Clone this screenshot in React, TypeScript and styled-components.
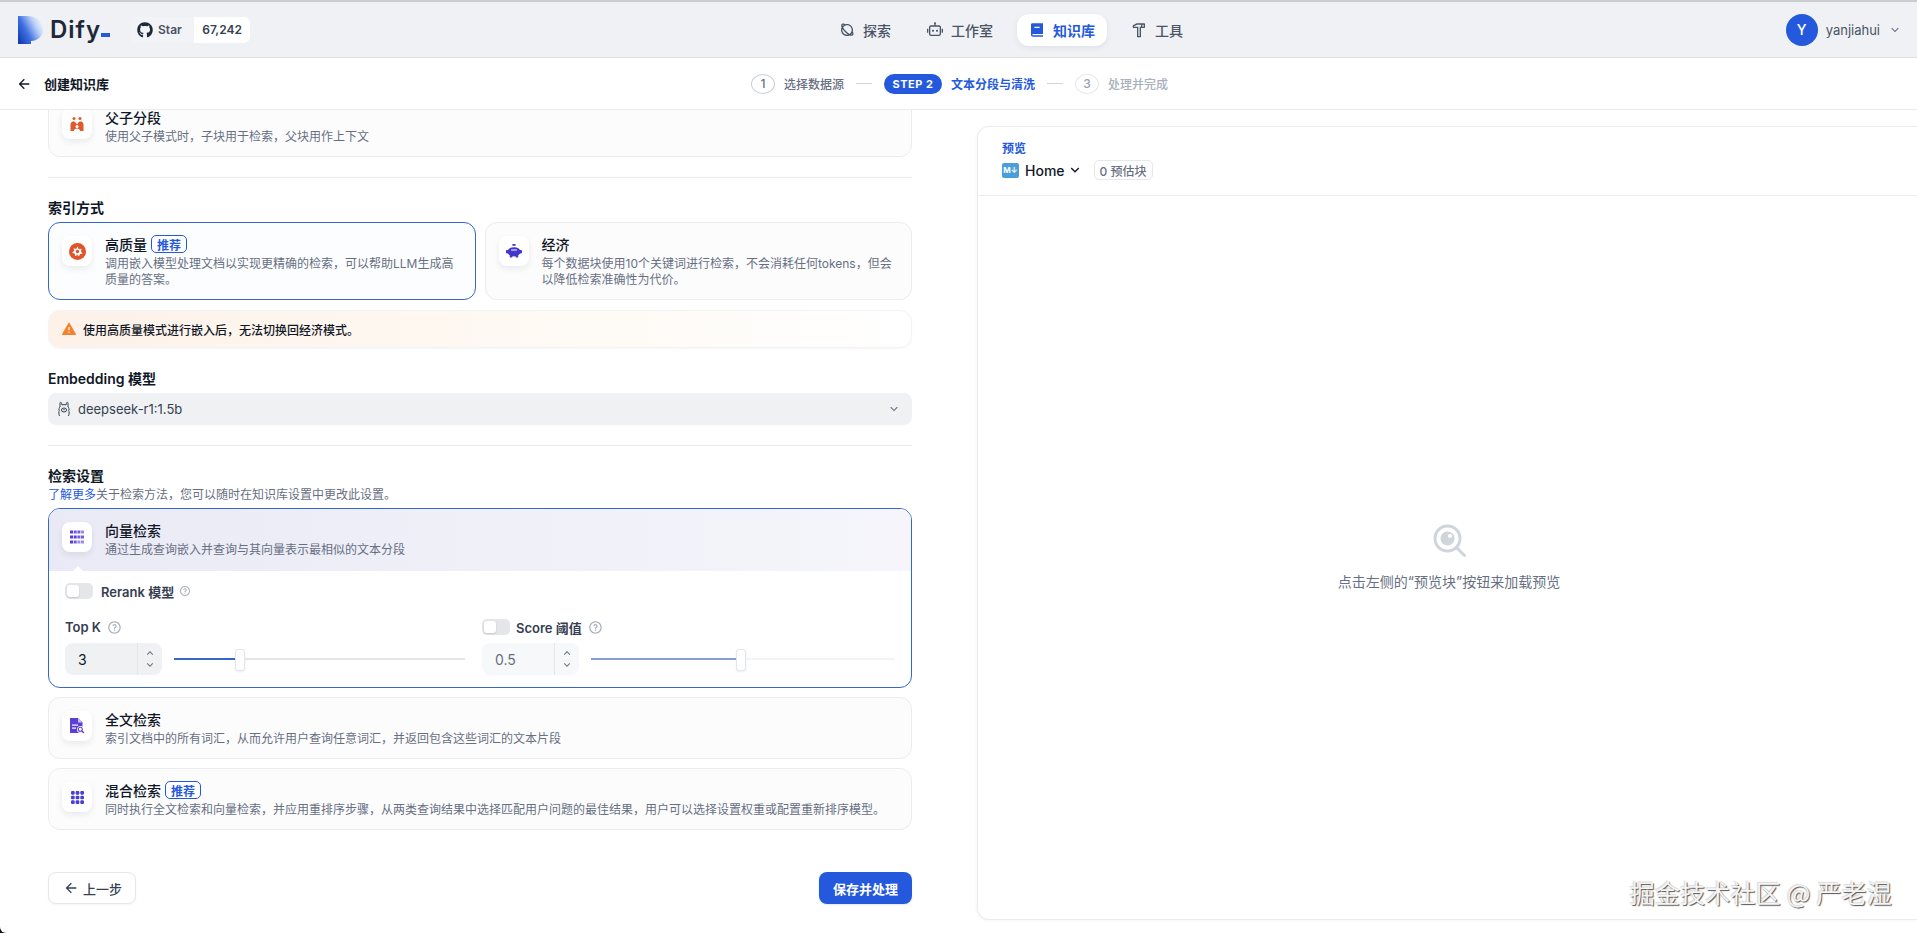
import React from 'react'
import styled, { createGlobalStyle } from 'styled-components'
import { FaGithub } from 'react-icons/fa'
import {
    RiAlertFill,
    RiArrowDownSLine,
    RiArrowLeftLine,
    RiArrowUpSLine,
    RiBook2Fill,
    RiHammerLine,
    RiPlanetLine,
    RiQuestionLine,
    RiRobot2Line,
} from 'react-icons/ri'

const blue = '#2559dd'
const ink = '#101828'
const body = '#354052'
const muted = '#676f83'
const line = '#eaecf0'

const GlobalStyle = createGlobalStyle`
    html, body {
        margin: 0;
        height: 100%;
        overflow: hidden;
        background: #111;
        font-family: Inter, "Noto Sans CJK SC", sans-serif;
        color: ${ink};
    }
    * {
        box-sizing: border-box;
    }
`

const Page = styled.div`
    position: relative;
    display: flex;
    flex-direction: column;
    width: 1917px;
    height: 933px;
    overflow: hidden;
    background: #fff;
    border-bottom-left-radius: 6px;
`

const TopBar = styled.header`
    display: grid;
    grid-template-columns: 827px auto 1fr;
    align-items: center;
    height: 58px;
    flex: none;
    background: #eff1f5;
    border-top: 2px solid #cbcccf;
    border-bottom: 1px solid #dfe1e5;
`

const Brand = styled.div`
    display: flex;
    align-items: center;
    padding-left: 18px;
`

const LogoText = styled.span`
    margin-left: 7px;
    font-size: 24px;
    line-height: 28px;
    font-weight: 600;
    letter-spacing: 1px;
    color: #1d2939;
`

const LogoCursor = styled.span`
    align-self: flex-end;
    width: 9px;
    height: 4px;
    margin: 0 21px 7px 0;
    background: ${blue};
`

const StarButton = styled.div`
    display: flex;
    align-items: center;
    gap: 5px;
    width: 63px;
    height: 26px;
    padding-left: 6px;
    font-size: 12px;
    font-weight: 600;
    color: #495464;
    background: #f2f3f6;
    border-radius: 6px 0 0 6px;
`

const StarCount = styled.div`
    display: flex;
    align-items: center;
    justify-content: center;
    width: 56px;
    height: 26px;
    font-size: 12px;
    font-weight: 600;
    color: #354052;
    background: #fff;
    border-radius: 0 6px 6px 0;
`

const Nav = styled.nav`
    display: flex;
    align-items: center;
    gap: 12px;
`

const NavItem = styled.a<{ $active?: boolean }>`
    display: flex;
    align-items: center;
    gap: 8px;
    height: 32px;
    padding: 0 12px;
    font-size: 14px;
    font-weight: ${({ $active }) => ($active ? 600 : 500)};
    color: ${({ $active }) => ($active ? blue : '#495464')};
    background: ${({ $active }) => ($active ? '#fff' : 'transparent')};
    border-radius: 12px;
    box-shadow: ${({ $active }) => ($active ? '0 2px 6px rgba(16, 24, 40, 0.07)' : 'none')};
`

const Account = styled.div`
    display: flex;
    align-items: center;
    justify-content: flex-end;
    gap: 8px;
    padding-right: 15px;
    font-size: 13px;
    color: #495464;
`

const Avatar = styled.div`
    display: flex;
    align-items: center;
    justify-content: center;
    width: 32px;
    height: 32px;
    font-size: 14px;
    font-weight: 500;
    color: #fff;
    background: ${blue};
    border-radius: 50%;
`

const StepBar = styled.div`
    display: grid;
    grid-template-columns: 751px auto;
    align-items: center;
    height: 52px;
    flex: none;
    background: #fff;
    border-bottom: 1px solid ${line};
`

const BackLink = styled.a`
    display: flex;
    align-items: center;
    gap: 12px;
    padding-left: 16px;
    font-size: 13px;
    font-weight: 600;
    color: ${ink};
`

const Steps = styled.div`
    display: flex;
    align-items: center;
`

const StepNumber = styled.span<{ $off?: boolean }>`
    display: flex;
    align-items: center;
    justify-content: center;
    width: 24px;
    height: 20px;
    margin-right: 9px;
    font-size: 12px;
    font-weight: 500;
    color: ${({ $off }) => ($off ? '#98a2b2' : muted)};
    border: 1px solid ${({ $off }) => ($off ? '#e4e7ec' : '#c8ceda')};
    border-radius: 50%;
`

const StepLabel = styled.span<{ $state?: 'on' | 'off' }>`
    font-size: 12px;
    font-weight: ${({ $state }) => ($state === 'on' ? 600 : 500)};
    color: ${({ $state }) => ($state === 'on' ? blue : $state === 'off' ? '#a8b0bc' : muted)};
`

const StepLine = styled.span`
    width: 16px;
    height: 1px;
    margin: 0 12px;
    background: #d0d5dc;
`

const StepPill = styled.span`
    display: flex;
    align-items: center;
    justify-content: center;
    width: 58px;
    height: 20px;
    margin-right: 9px;
    font-size: 11px;
    font-weight: 700;
    letter-spacing: 0.5px;
    color: #fff;
    background: ${blue};
    border-radius: 10px;
`

const Main = styled.main`
    display: flex;
    flex: 1;
    min-height: 0;
`

const FormPane = styled.section`
    width: 977px;
    flex: none;
    padding: 0 65px 0 48px;
    overflow: hidden;
`

// the form is scrolled a little: the first card runs under the step bar
const FormScroll = styled.div`
    display: flex;
    flex-direction: column;
    margin-top: -15px;
`

const OptionCard = styled.div<{ $active?: boolean }>`
    display: flex;
    gap: 13px;
    padding: 11px 13px;
    background: ${({ $active }) => ($active ? '#fcfdfe' : '#fcfcfd')};
    border: 1px solid ${({ $active }) => ($active ? '#3566c8' : line)};
    border-radius: 12px;
`

const CardIcon = styled.div`
    display: flex;
    align-items: center;
    justify-content: center;
    width: 30px;
    height: 30px;
    flex: none;
    margin-top: 2px;
    background: #fff;
    border-radius: 8px;
    box-shadow: 0 3px 6px rgba(16, 24, 40, 0.08);
`

const CardText = styled.div`
    flex: 1;
    min-width: 0;
`

const CardTitle = styled.div`
    display: flex;
    align-items: center;
    gap: 4px;
    height: 20px;
    font-size: 14px;
    font-weight: 500;
    color: ${ink};
`

const CardDesc = styled.div`
    margin-top: 2px;
    font-size: 12px;
    line-height: 16px;
    color: ${muted};
`

const Badge = styled.span`
    display: flex;
    align-items: center;
    height: 18px;
    padding: 0 5px;
    font-size: 12px;
    font-weight: 600;
    color: ${blue};
    background: #fff;
    border: 1px solid ${blue};
    border-radius: 5px;
`

const Divider = styled.hr`
    width: 100%;
    height: 1px;
    margin: 20px 0;
    border: 0;
    background: ${line};
`

const SectionTitle = styled.h2<{ $top?: number }>`
    margin: ${({ $top }) => $top ?? 0}px 0 4px;
    font-size: 14px;
    line-height: 20px;
    font-weight: 600;
    color: ${ink};
`

const SectionNote = styled.p`
    margin: -3px 0 5px;
    font-size: 12px;
    line-height: 16px;
    color: ${muted};

    a {
        color: ${blue};
    }
`

const IndexGrid = styled.div`
    display: grid;
    grid-template-columns: 1fr 1fr;
    gap: 9px;
`

const Notice = styled.div`
    display: flex;
    align-items: center;
    gap: 6px;
    height: 38px;
    margin-top: 10px;
    padding-left: 12px;
    font-size: 12px;
    font-weight: 500;
    color: ${ink};
    background: linear-gradient(90deg, #fdf1e8 0%, #fef8f1 45%, #fff 100%);
    border: 1px solid #f2f3f5;
    border-radius: 12px;
    box-shadow: 0 1px 2px rgba(16, 24, 40, 0.04);
`

const ModelSelect = styled.div`
    display: flex;
    align-items: center;
    gap: 7px;
    height: 32px;
    padding: 0 11px 0 9px;
    font-size: 13px;
    color: ${body};
    background: #f0f1f3;
    border-radius: 8px;
`

const ModelName = styled.span`
    flex: 1;
`

const SearchCard = styled.div`
    overflow: hidden;
    background: #fff;
    border: 1px solid #3566c8;
    border-radius: 12px;
`

const SearchHead = styled.div`
    position: relative;
    display: flex;
    gap: 13px;
    height: 62px;
    padding: 11px 13px;
    background: linear-gradient(90deg, #eaeaf6 0%, #f5f5fb 100%);

    &::after {
        content: '';
        position: absolute;
        left: 24px;
        bottom: 0;
        border: 5px solid transparent;
        border-top: 0;
        border-bottom-color: #fff;
    }
`

const SearchBody = styled.div`
    display: flex;
    flex-direction: column;
    gap: 20px;
    padding: 12px 16px;
`

const ToggleRow = styled.div`
    display: flex;
    align-items: center;
    gap: 8px;
    height: 16px;
`

const Toggle = styled.span`
    display: block;
    width: 28px;
    height: 16px;
    padding: 2px;
    background: #e4e6ea;
    border-radius: 5px;

    &::before {
        content: '';
        display: block;
        width: 12px;
        height: 12px;
        background: #fff;
        border-radius: 3px;
        box-shadow: 0 1px 2px rgba(16, 24, 40, 0.15);
    }
`

const FieldLabel = styled.span`
    font-size: 13px;
    font-weight: 600;
    color: ${body};
`

const HelpIcon = styled(RiQuestionLine)<{ $small?: boolean }>`
    flex: none;
    margin-left: ${({ $small }) => ($small ? -3 : 0)}px;
    font-size: ${({ $small }) => ($small ? 12 : 15)}px;
    color: #a8b0bc;
`

const ParamGrid = styled.div`
    display: grid;
    grid-template-columns: 400px 1fr;
    gap: 17px;
`

const Param = styled.div`
    display: flex;
    flex-direction: column;
    gap: 8px;
`

const LabelRow = styled.div`
    display: flex;
    align-items: center;
    gap: 6px;
    height: 16px;
`

const ControlRow = styled.div`
    display: flex;
    align-items: center;
    gap: 12px;
`

const NumberBox = styled.div<{ $off?: boolean }>`
    display: flex;
    width: 97px;
    height: 32px;
    flex: none;
    font-size: 14px;
    color: ${({ $off }) => ($off ? muted : ink)};
    background: ${({ $off }) => ($off ? '#f7f8fa' : '#f0f1f3')};
    border-radius: 8px;
`

const NumberValue = styled.span`
    display: flex;
    align-items: center;
    flex: 1;
    padding-left: 13px;
`

const Spinner = styled.span`
    display: flex;
    flex-direction: column;
    align-items: center;
    justify-content: center;
    width: 25px;
    font-size: 12px;
    line-height: 11px;
    color: ${muted};
    border-left: 1px solid #e4e6ea;
`

const Slider = styled.div<{ $off?: boolean }>`
    position: relative;
    flex: 1;
    height: 2px;
    background: ${({ $off }) => ($off ? '#f3f4f6' : '#e4e6ea')};
`

const SliderFill = styled.div<{ $pct: number; $off?: boolean }>`
    position: relative;
    width: ${({ $pct }) => $pct}%;
    height: 2px;
    background: ${({ $off }) => ($off ? '#8a9bd8' : '#3566c8')};

    &::after {
        content: '';
        position: absolute;
        right: -4px;
        top: -9px;
        width: 8px;
        height: 20px;
        background: #fff;
        border: 1px solid #e4e6ea;
        border-radius: 3px;
        box-shadow: 0 1px 2px rgba(16, 24, 40, 0.08);
    }
`

const MethodStack = styled.div`
    display: flex;
    flex-direction: column;
    gap: 9px;
    margin-top: 9px;
`

const Actions = styled.div`
    display: flex;
    justify-content: space-between;
    margin-top: 42px;
`

const BackButton = styled.button`
    display: flex;
    align-items: center;
    gap: 4px;
    width: 88px;
    height: 32px;
    padding: 0 0 0 14px;
    font: 500 13px Inter, "Noto Sans CJK SC", sans-serif;
    color: ${body};
    background: #fff;
    border: 1px solid #e4e7ec;
    border-radius: 8px;
    box-shadow: 0 1px 2px rgba(16, 24, 40, 0.05);
`

const SaveButton = styled.button`
    width: 93px;
    height: 32px;
    padding: 0;
    font: 600 13px Inter, "Noto Sans CJK SC", sans-serif;
    color: #fff;
    background: ${blue};
    border: 0;
    border-radius: 8px;
    box-shadow: 0 1px 2px rgba(16, 24, 40, 0.1);
`

const PreviewPane = styled.aside`
    display: flex;
    flex-direction: column;
    flex: 1;
    margin: 16px 0 13px;
    background: #fff;
    border: 1px solid ${line};
    border-right: 0;
    border-radius: 12px 0 0 12px;
    box-shadow: -1px 1px 3px rgba(16, 24, 40, 0.04);
`

const PreviewHead = styled.div`
    height: 69px;
    flex: none;
    padding: 14px 24px 0;
    border-bottom: 1px solid ${line};
`

const PreviewLabel = styled.div`
    font-size: 12px;
    line-height: 16px;
    font-weight: 600;
    color: ${blue};
`

const PreviewDoc = styled.div`
    display: flex;
    align-items: center;
    gap: 2px;
    height: 24px;
    margin-top: 1px;
    font-size: 14px;
    font-weight: 500;
    color: ${ink};
`

const MdBadge = styled.span`
    display: flex;
    align-items: center;
    justify-content: center;
    width: 17px;
    height: 15px;
    margin-right: 4px;
    font-size: 8px;
    font-weight: 700;
    color: #fff;
    background: #4a9fd8;
    border-radius: 2px;
`

const ChunkCount = styled.span`
    display: flex;
    align-items: center;
    height: 20px;
    margin-left: 9px;
    padding: 0 5px;
    font-size: 12px;
    font-weight: 500;
    color: ${muted};
    border: 1px solid #e4e7ec;
    border-radius: 5px;
`

const PreviewEmpty = styled.div`
    display: flex;
    flex-direction: column;
    align-items: center;
    justify-content: center;
    gap: 16px;
    flex: 1;
    padding-left: 3px;
    font-size: 14px;
    line-height: 18px;
    color: ${muted};
`

const Watermark = styled.div`
    position: absolute;
    right: 25px;
    bottom: 25px;
    font-family: "Noto Sans CJK SC", sans-serif;
    font-size: 25px;
    line-height: 32px;
    letter-spacing: 0.2px;
    color: #f4f4f4;
    text-shadow: 1px 1px 1px #555, -1px -1px 1px rgba(0, 0, 0, 0.15);
    white-space: pre;
`

const DifyLogo = () => (
    <svg width="25" height="28" viewBox="0 0 25 28">
        <defs>
            <linearGradient id="dify-mark" x1="0" y1="0.9" x2="1" y2="0.3">
                <stop offset="0" stopColor="#1238b0" />
                <stop offset="0.4" stopColor="#3f70e0" />
                <stop offset="0.75" stopColor="#b9cff7" />
                <stop offset="1" stopColor="#f0f4fd" />
            </linearGradient>
        </defs>
        <path d="M0 0H9C18.500 0 25 5.500 25 13.500C25 20 20.500 24.500 13 25V28H0Z" fill="url(#dify-mark)" />
    </svg>
)

const ParentChildIcon = () => (
    <svg width="16" height="16" viewBox="0 0 16 16" fill="#e0592a">
        <circle cx="5" cy="2.600" r="1.500" />
        <circle cx="11" cy="2.600" r="1.500" />
        <path d="M1.500 15V8.500C1.500 7 2.700 5.500 4 5.500H5C6.200 5.500 7 7 8 8.500C9 7 9.800 5.500 11 5.500H12C13.300 5.500 14.500 7 14.500 8.500V15Z" />
        <circle cx="8" cy="10.600" r="1.500" fill="#fff" />
        <path d="M4.800 15C4.800 13.200 6.500 12.400 8 12.400C9.500 12.400 11.200 13.200 11.200 15Z" fill="#fff" />
    </svg>
)

const QualityIcon = () => (
    <svg width="17" height="17" viewBox="0 0 16 16">
        <circle cx="8" cy="8" r="8" fill="#e0532b" />
        <path
            d="M8 3.400L9.300 5.800L11.900 5.300L11.200 7.900L13 9.800L10.400 10.400L9.400 12.800L8 11L5.800 12.500L5.500 10L3 9.200L4.900 7.400L4.300 4.900L6.800 5.700Z"
            fill="#fff"
        />
        <circle cx="8" cy="8" r="1.600" fill="#e0532b" />
    </svg>
)

const PiggyIcon = () => (
    <svg width="16" height="16" viewBox="0 0 16 16" fill="#4338ca">
        <rect x="6.200" y="1" width="3.600" height="1.800" rx="0.900" />
        <ellipse cx="8" cy="8.800" rx="6.600" ry="4.600" />
        <rect x="0" y="7" width="2.500" height="3.400" rx="0.800" />
        <rect x="13.500" y="7" width="2.500" height="3.400" rx="0.800" />
        <rect x="3.800" y="12" width="2.600" height="2.600" rx="0.600" />
        <rect x="9.600" y="12" width="2.600" height="2.600" rx="0.600" />
        <rect x="5" y="6.500" width="6" height="1" rx="0.500" fill="#fff" />
    </svg>
)

const VectorIcon = () => (
    <svg width="14" height="14" viewBox="0 0 14 14" fill="#5a3fd6">
        <rect x="0" y="0.500" width="3" height="3" />
        <rect x="3.700" y="0.500" width="3" height="3" opacity="0.85" />
        <rect x="7.400" y="0.500" width="3" height="3" opacity="0.85" />
        <rect x="11" y="0.500" width="3" height="3" opacity="0.6" />
        <rect x="0" y="5.500" width="3" height="3" />
        <rect x="3.700" y="5.500" width="3" height="3" />
        <rect x="7.400" y="5.500" width="3" height="3" opacity="0.85" />
        <rect x="11" y="5.500" width="3" height="3" opacity="0.85" />
        <rect x="0" y="10.500" width="3" height="3" />
        <rect x="3.700" y="10.500" width="3" height="3" opacity="0.85" />
        <rect x="7.400" y="10.500" width="3" height="3" opacity="0.6" />
        <rect x="11" y="10.500" width="3" height="3" opacity="0.6" />
    </svg>
)

const FullTextIcon = () => (
    <svg width="15" height="16" viewBox="0 0 15 16">
        <path d="M0 0H8L12.500 4.500V15H0Z" fill="#5b3fd6" />
        <path d="M8 0V4.500H12.500Z" fill="#c9c0f2" />
        <rect x="2" y="6.500" width="6" height="1.200" fill="#fff" />
        <rect x="2" y="9.500" width="4" height="1.200" fill="#fff" />
        <circle cx="10.500" cy="11.500" r="3.500" fill="#fff" />
        <circle cx="10.300" cy="11.300" r="2" fill="none" stroke="#5b3fd6" strokeWidth="1.100" />
        <path d="M11.800 12.800L14 15" stroke="#5b3fd6" strokeWidth="1.200" />
    </svg>
)

const HybridIcon = () => (
    <svg width="13" height="13" viewBox="0 0 14 14" fill="#4a3fd0">
        {[0, 5, 10].map((y) =>
            [0, 5, 10].map((x) => <rect key={`${x}-${y}`} x={x} y={y} width="4" height="4" rx="1.200" />),
        )}
    </svg>
)

const OllamaIcon = () => (
    <svg width="14" height="16" viewBox="0 0 14 16" fill="none" stroke="#354052" strokeWidth="1">
        <path d="M3 6V2.200C3 1 4.300 1 4.600 2.200L5 4C6.200 3.500 7.800 3.500 9 4L9.400 2.200C9.700 1 11 1 11 2.200V6C12.200 7 12.200 8.500 11.700 9.500C12.300 10.800 12.300 13 11.500 15M2.500 15C1.700 13 1.700 10.800 2.300 9.500C1.800 8.500 1.800 7 3 6" />
        <ellipse cx="7" cy="9" rx="2.600" ry="2" />
        <path d="M6.300 8.800H7.700" />
    </svg>
)

const PreviewSearchIcon = () => (
    <svg width="33" height="33" viewBox="0 0 33 33" fill="none">
        <circle cx="14.500" cy="14.500" r="12.500" stroke="#d0d5dc" strokeWidth="3" />
        <circle cx="14.500" cy="14.500" r="7" fill="#d0d5dc" />
        <circle cx="17" cy="12" r="2" fill="#fff" />
        <path d="M24 24L31.500 31.500" stroke="#d0d5dc" strokeWidth="3" strokeLinecap="round" />
    </svg>
)

const App = () => {
    return (
        <Page>
            <GlobalStyle />
            <TopBar>
                <Brand>
                    <DifyLogo />
                    <LogoText>Dify</LogoText>
                    <LogoCursor />
                    <StarButton>
                        <FaGithub size={16} color="#1d2939" />
                        Star
                    </StarButton>
                    <StarCount>67,242</StarCount>
                </Brand>
                <Nav>
                    <NavItem>
                        <RiPlanetLine size={16} />
                        探索
                    </NavItem>
                    <NavItem>
                        <RiRobot2Line size={16} />
                        工作室
                    </NavItem>
                    <NavItem $active>
                        <RiBook2Fill size={16} />
                        知识库
                    </NavItem>
                    <NavItem>
                        <RiHammerLine size={16} />
                        工具
                    </NavItem>
                </Nav>
                <Account>
                    <Avatar>Y</Avatar>
                    yanjiahui
                    <RiArrowDownSLine size={14} color="#676f83" />
                </Account>
            </TopBar>

            <StepBar>
                <BackLink>
                    <RiArrowLeftLine size={16} />
                    创建知识库
                </BackLink>
                <Steps>
                    <StepNumber>1</StepNumber>
                    <StepLabel>选择数据源</StepLabel>
                    <StepLine />
                    <StepPill>STEP 2</StepPill>
                    <StepLabel $state="on">文本分段与清洗</StepLabel>
                    <StepLine />
                    <StepNumber $off>3</StepNumber>
                    <StepLabel $state="off">处理并完成</StepLabel>
                </Steps>
            </StepBar>

            <Main>
                <FormPane>
                    <FormScroll>
                        <OptionCard>
                            <CardIcon>
                                <ParentChildIcon />
                            </CardIcon>
                            <CardText>
                                <CardTitle>父子分段</CardTitle>
                                <CardDesc>使用父子模式时，子块用于检索，父块用作上下文</CardDesc>
                            </CardText>
                        </OptionCard>

                        <Divider />

                        <SectionTitle>索引方式</SectionTitle>
                        <IndexGrid>
                            <OptionCard $active>
                                <CardIcon>
                                    <QualityIcon />
                                </CardIcon>
                                <CardText>
                                    <CardTitle>
                                        高质量
                                        <Badge>推荐</Badge>
                                    </CardTitle>
                                    <CardDesc>调用嵌入模型处理文档以实现更精确的检索，可以帮助LLM生成高质量的答案。</CardDesc>
                                </CardText>
                            </OptionCard>
                            <OptionCard>
                                <CardIcon>
                                    <PiggyIcon />
                                </CardIcon>
                                <CardText>
                                    <CardTitle>经济</CardTitle>
                                    <CardDesc>每个数据块使用10个关键词进行检索，不会消耗任何tokens，但会以降低检索准确性为代价。</CardDesc>
                                </CardText>
                            </OptionCard>
                        </IndexGrid>
                        <Notice>
                            <RiAlertFill size={16} color="#f2822f" />
                            使用高质量模式进行嵌入后，无法切换回经济模式。
                        </Notice>

                        <SectionTitle $top={21}>Embedding 模型</SectionTitle>
                        <ModelSelect>
                            <OllamaIcon />
                            <ModelName>deepseek-r1:1.5b</ModelName>
                            <RiArrowDownSLine size={14} color="#676f83" />
                        </ModelSelect>

                        <Divider />

                        <SectionTitle>检索设置</SectionTitle>
                        <SectionNote>
                            <a>了解更多</a>关于检索方法，您可以随时在知识库设置中更改此设置。
                        </SectionNote>

                        <SearchCard>
                            <SearchHead>
                                <CardIcon>
                                    <VectorIcon />
                                </CardIcon>
                                <CardText>
                                    <CardTitle>向量检索</CardTitle>
                                    <CardDesc>通过生成查询嵌入并查询与其向量表示最相似的文本分段</CardDesc>
                                </CardText>
                            </SearchHead>
                            <SearchBody>
                                <ToggleRow>
                                    <Toggle />
                                    <FieldLabel>Rerank 模型</FieldLabel>
                                    <HelpIcon $small />
                                </ToggleRow>
                                <ParamGrid>
                                    <Param>
                                        <LabelRow>
                                            <FieldLabel>Top K</FieldLabel>
                                            <HelpIcon />
                                        </LabelRow>
                                        <ControlRow>
                                            <NumberBox>
                                                <NumberValue>3</NumberValue>
                                                <Spinner>
                                                    <RiArrowUpSLine />
                                                    <RiArrowDownSLine />
                                                </Spinner>
                                            </NumberBox>
                                            <Slider>
                                                <SliderFill $pct={23} />
                                            </Slider>
                                        </ControlRow>
                                    </Param>
                                    <Param>
                                        <LabelRow>
                                            <Toggle />
                                            <FieldLabel>Score 阈值</FieldLabel>
                                            <HelpIcon />
                                        </LabelRow>
                                        <ControlRow>
                                            <NumberBox $off>
                                                <NumberValue>0.5</NumberValue>
                                                <Spinner>
                                                    <RiArrowUpSLine />
                                                    <RiArrowDownSLine />
                                                </Spinner>
                                            </NumberBox>
                                            <Slider $off>
                                                <SliderFill $pct={49.800} $off />
                                            </Slider>
                                        </ControlRow>
                                    </Param>
                                </ParamGrid>
                            </SearchBody>
                        </SearchCard>

                        <MethodStack>
                            <OptionCard>
                                <CardIcon>
                                    <FullTextIcon />
                                </CardIcon>
                                <CardText>
                                    <CardTitle>全文检索</CardTitle>
                                    <CardDesc>索引文档中的所有词汇，从而允许用户查询任意词汇，并返回包含这些词汇的文本片段</CardDesc>
                                </CardText>
                            </OptionCard>
                            <OptionCard>
                                <CardIcon>
                                    <HybridIcon />
                                </CardIcon>
                                <CardText>
                                    <CardTitle>
                                        混合检索
                                        <Badge>推荐</Badge>
                                    </CardTitle>
                                    <CardDesc>同时执行全文检索和向量检索，并应用重排序步骤，从两类查询结果中选择匹配用户问题的最佳结果，用户可以选择设置权重或配置重新排序模型。</CardDesc>
                                </CardText>
                            </OptionCard>
                        </MethodStack>

                        <Actions>
                            <BackButton>
                                <RiArrowLeftLine size={16} />
                                上一步
                            </BackButton>
                            <SaveButton>保存并处理</SaveButton>
                        </Actions>
                    </FormScroll>
                </FormPane>

                <PreviewPane>
                    <PreviewHead>
                        <PreviewLabel>预览</PreviewLabel>
                        <PreviewDoc>
                            <MdBadge>M↓</MdBadge>
                            Home
                            <RiArrowDownSLine size={16} />
                            <ChunkCount>0 预估块</ChunkCount>
                        </PreviewDoc>
                    </PreviewHead>
                    <PreviewEmpty>
                        <PreviewSearchIcon />
                        点击左侧的“预览块”按钮来加载预览
                    </PreviewEmpty>
                </PreviewPane>
            </Main>

            <Watermark>掘金技术社区 @ 严老湿</Watermark>
        </Page>
    )
}

export default App
